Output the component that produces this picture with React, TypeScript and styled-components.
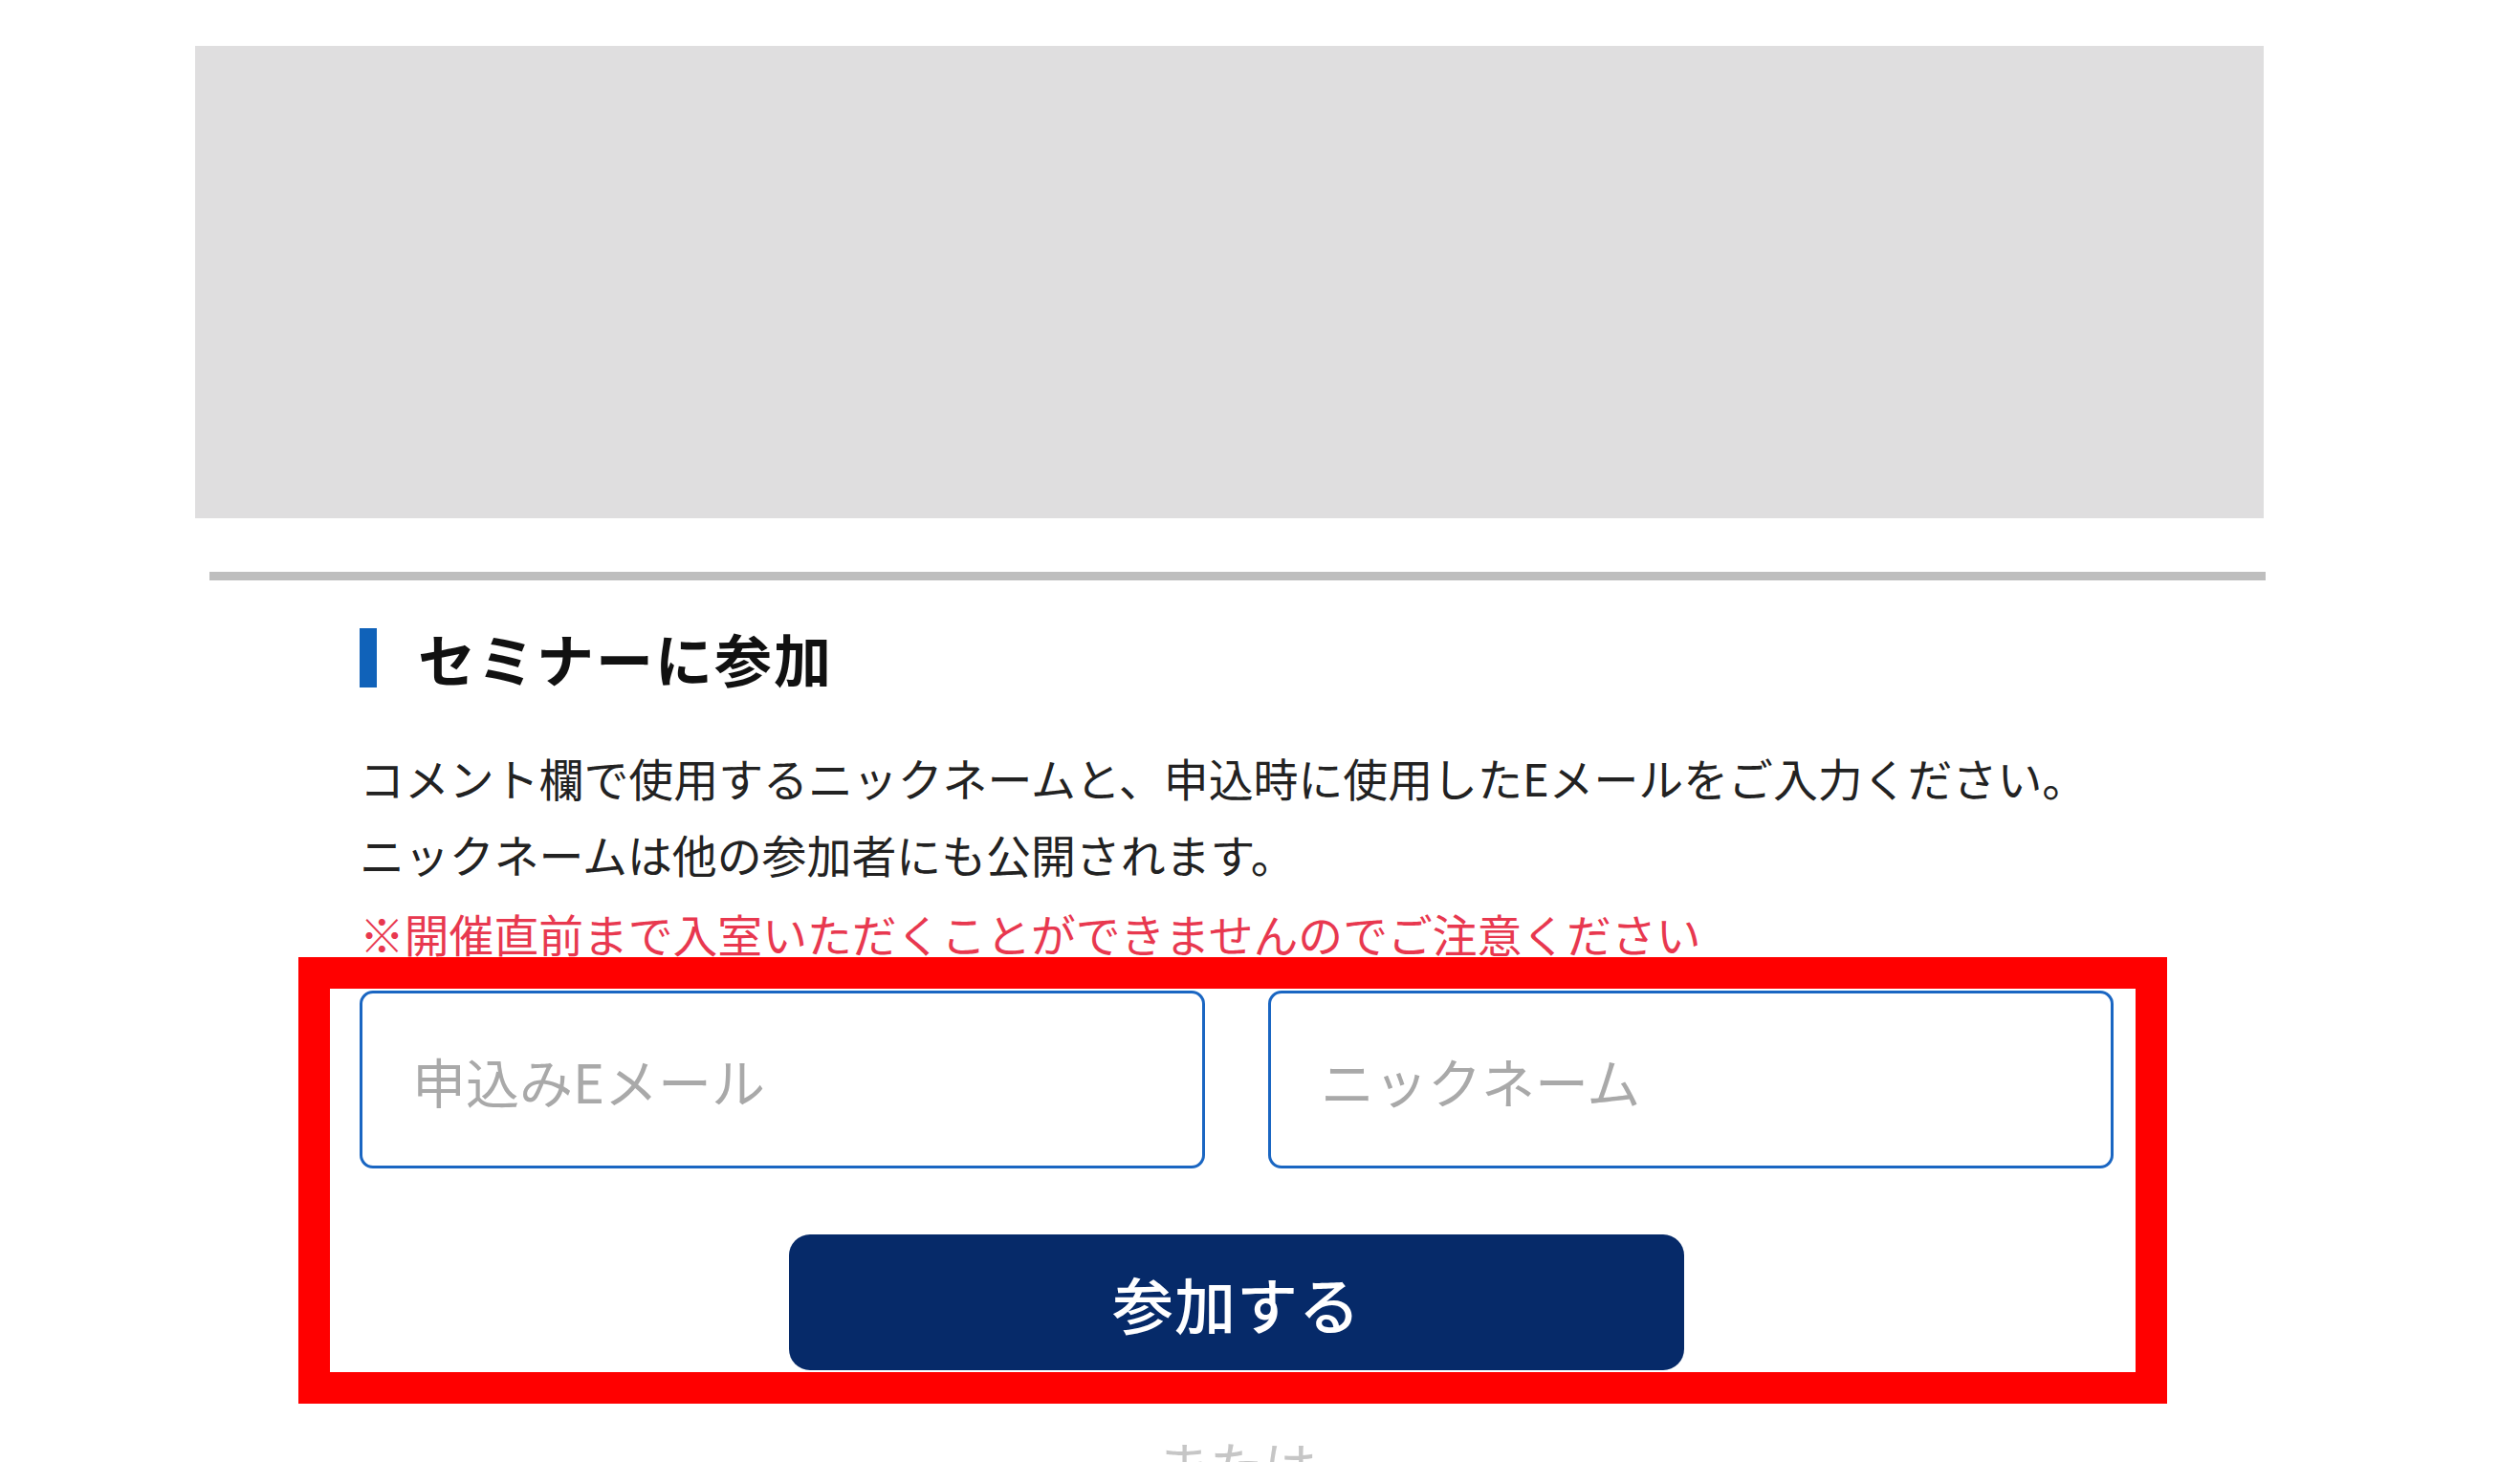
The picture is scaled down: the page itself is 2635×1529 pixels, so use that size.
import React from "react";
import styled, { createGlobalStyle } from "styled-components";

const GlobalStyle = createGlobalStyle`
  html, body {
    margin: 0;
    padding: 0;
    background: #ffffff;
  }
  body {
    font-family: "Noto Sans CJK JP", "Noto Sans", sans-serif;
    color: #222222;
    overflow: hidden;
  }
  * { box-sizing: border-box; }
`;

const Page = styled.div`
  width: 2635px;
  height: 1529px;
  padding-top: 48px;
  overflow: hidden;
`;

const Banner = styled.div`
  margin-left: 204px;
  width: 2163px;
  height: 494px;
  background: #dfdedf;
`;

const Divider = styled.hr`
  margin: 56px 0 0 219px;
  width: 2150px;
  height: 9px;
  border: none;
  background: #bebebe;
`;

const Section = styled.section`
  margin-left: 376px;
  width: 1834px;
  display: flex;
  flex-direction: column;
`;

const Heading = styled.h2`
  margin: 50px 0 0 0;
  height: 62px;
  display: flex;
  align-items: center;
  gap: 43px;
  font-size: 60px;
  font-weight: 700;
  letter-spacing: 2px;
  color: #111111;
  line-height: 1;

  &::before {
    content: "";
    display: block;
    width: 18px;
    height: 62px;
    background: #1062b9;
  }
`;

const Lead = styled.p`
  margin: 54px 0 0 0;
  font-size: 46.9px;
  line-height: 80px;
  color: #222222;
`;

const Caution = styled.p`
  margin: 3px 0 0 0;
  font-size: 46.8px;
  line-height: 80px;
  color: #e8384f;
`;

const FormArea = styled.div`
  position: relative;
  margin-top: 20px;
  display: flex;
  flex-direction: column;
  align-items: center;
`;

const InputRow = styled.div`
  width: 100%;
  display: grid;
  grid-template-columns: 1fr 1fr;
  gap: 66px;
`;

const TextInput = styled.input`
  height: 186px;
  width: 100%;
  border: 3px solid #1a66c2;
  border-radius: 14px;
  padding: 0 0 0 52px;
  font-family: "Noto Sans CJK JP", "Noto Sans", sans-serif;
  font-size: 56px;
  color: #222;
  background: #fff;
  outline: none;

  &::placeholder {
    color: #a9a9a9;
  }
`;

const JoinButton = styled.button`
  margin-top: 69px;
  width: 936px;
  height: 142px;
  border: none;
  border-radius: 22px;
  background: #062a69;
  color: #ffffff;
  font-family: "Noto Sans CJK JP", "Noto Sans", sans-serif;
  font-size: 64px;
  font-weight: 500;
  letter-spacing: 1px;
  cursor: pointer;
`;

const Annotation = styled.div`
  position: absolute;
  top: -35px;
  left: -64px;
  right: -56px;
  bottom: -35px;
  border: 33px solid #ff0000;
  pointer-events: none;
`;

const OrText = styled.div`
  margin-top: 56px;
  text-align: center;
  font-size: 56px;
  line-height: 84px;
  color: #c6c6c6;
`;

export default function App() {
  return (
    <>
      <GlobalStyle />
      <Page>
        <Banner />
        <Divider />
        <Section>
          <Heading>セミナーに参加</Heading>
          <Lead>
            コメント欄で使用するニックネームと、申込時に使用したEメールをご入力ください。
            <br />
            ニックネームは他の参加者にも公開されます。
          </Lead>
          <Caution>※開催直前まで入室いただくことができませんのでご注意ください</Caution>
          <FormArea>
            <InputRow>
              <TextInput type="email" placeholder="申込みEメール" />
              <TextInput type="text" placeholder="ニックネーム" />
            </InputRow>
            <JoinButton type="button">参加する</JoinButton>
            <Annotation />
          </FormArea>
          <OrText>または</OrText>
        </Section>
      </Page>
    </>
  );
}
